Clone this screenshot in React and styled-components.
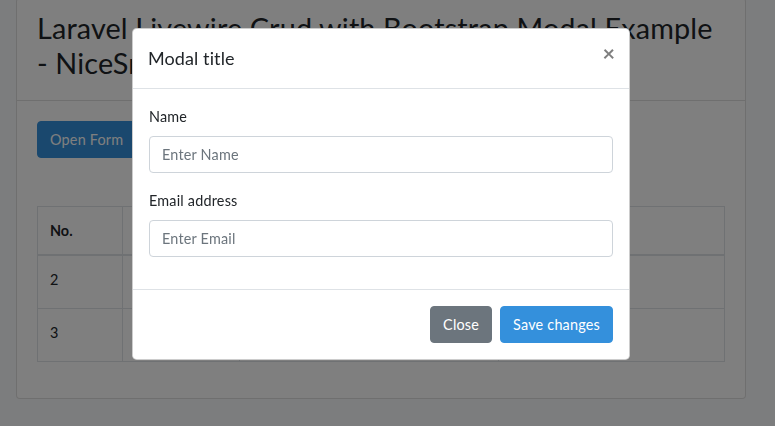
import React from "react";
import styled, { createGlobalStyle } from "styled-components";

const Global = createGlobalStyle`
  html, body { margin: 0; padding: 0; }
  body {
    background: #f8fafc;
    font-family: Lato, "Open Sans", sans-serif;
    font-size: 14.4px;
    line-height: 1.6;
    color: #212529;
    overflow: hidden;
  }
  * { box-sizing: border-box; }
`;

const Page = styled.div`
  padding: 0 29px 0 16px;
  height: 426px;
`;

const Card = styled.div`
  margin-top: -2px;
  background: #fff;
  border: 1px solid rgba(0, 0, 0, 0.125);
  border-radius: 4px;
`;

const CardHeader = styled.div`
  padding: 12px 20px;
  border-bottom: 1px solid rgba(0, 0, 0, 0.125);
`;

const Title = styled.h2`
  margin: 0 0 8px;
  font-size: 28.8px;
  font-weight: 400;
  line-height: 1.2;
  letter-spacing: 0.14px;
`;

const CardBody = styled.div`
  padding: 20px;
`;

const Button = styled.button`
  display: inline-block;
  vertical-align: top;
  font-family: inherit;
  font-size: ${(p) => (p.$sm ? "12.6px" : "14.4px")};
  line-height: ${(p) => (p.$sm ? 1.5 : 1.6)};
  height: ${(p) => (p.$sm ? "28px" : "37px")};
  padding: ${(p) => (p.$sm ? "3px 8px" : "6px 12px")};
  border-radius: ${(p) => (p.$sm ? "3.2px" : "4px")};
  border: 1px solid ${(p) => p.$bg};
  background: ${(p) => p.$bg};
  color: #fff;
  margin: ${(p) => p.$m || "0"};
  letter-spacing: 0.2px;
  cursor: pointer;
`;

const Table = styled.table`
  width: 100%;
  margin-top: 48px;
  margin-bottom: 16px;
  border-collapse: collapse;
  table-layout: fixed;
`;

const Th = styled.th`
  width: ${(p) => p.$w || "auto"};
  text-align: left;
  padding: 12px;
  border: 1px solid #dee2e6;
  border-bottom: 2px solid #dee2e6;
  font-weight: 700;
`;

const Td = styled.td`
  padding: 12px;
  border: 1px solid #dee2e6;
  vertical-align: top;
  line-height: 23px;
`;

const Backdrop = styled.div`
  position: fixed;
  inset: 0;
  background: rgba(0, 0, 0, 0.5);
`;

const Modal = styled.div`
  position: fixed;
  top: 28px;
  left: 132px;
  width: 498px;
  background: #fff;
  border: 1px solid rgba(0, 0, 0, 0.2);
  border-radius: 4.8px;
  display: flex;
  flex-direction: column;
`;

const ModalHeader = styled.div`
  display: flex;
  align-items: flex-start;
  justify-content: space-between;
  padding: 16px 16px 16px 15px;
  border-bottom: 1px solid #dee2e6;
`;

const ModalTitle = styled.h5`
  margin: 0;
  font-size: 18px;
  font-weight: 400;
  line-height: 1.5;
  letter-spacing: 0.1px;
`;

const CloseX = styled.span`
  font-size: 21.6px;
  font-weight: 700;
  line-height: 1;
  color: #000;
  opacity: 0.5;
  margin-top: -2px;
  margin-right: -2px;
`;

const ModalBody = styled.div`
  padding: 16px;
  letter-spacing: 0.2px;
`;

const FormGroup = styled.div`
  margin-bottom: 16px;
`;

const Label = styled.label`
  display: block;
  margin-bottom: 8px;
`;

const Input = styled.input`
  display: block;
  width: 100%;
  height: 37px;
  padding: 6px 12px;
  font-family: inherit;
  font-size: 14.4px;
  line-height: 1.6;
  letter-spacing: 0.2px;
  color: #495057;
  border: 1px solid #ced4da;
  border-radius: 4px;
  background: #fff;
  &::placeholder { color: #6c757d; }
`;

const ModalFooter = styled.div`
  display: flex;
  justify-content: flex-end;
  align-items: center;
  padding: 12px;
  border-top: 1px solid #dee2e6;
`;

const rows = [
  { id: 2, name: "Hardik", email: "hardik@gmail.com" },
  { id: 3, name: "Vimal", email: "vimal@gmail.com" },
];

export default function App() {
  return (
    <>
      <Global />
      <Page>
        <Card>
          <CardHeader>
            <Title>
              Laravel Livewire Crud with Bootstrap Modal Example
              <br />
              - NiceSnippets.com
            </Title>
          </CardHeader>
          <CardBody>
            <Button $bg="#3490dc">Open Form</Button>
            <Table>
              <thead>
                <tr>
                  <Th $w="85px">No.</Th>
                  <Th $w="117px">Name</Th>
                  <Th $w="259px">Email</Th>
                  <Th>Action</Th>
                </tr>
              </thead>
              <tbody>
                {rows.map((r) => (
                  <tr key={r.id}>
                    <Td>{r.id}</Td>
                    <Td>{r.name}</Td>
                    <Td>{r.email}</Td>
                    <Td>
                      <Button $sm $bg="#3490dc" $m="0 4px 0 0">Edit</Button>
                      <Button $sm $bg="#e3342f">Delete</Button>
                    </Td>
                  </tr>
                ))}
              </tbody>
            </Table>
          </CardBody>
        </Card>
      </Page>
      <Backdrop />
      <Modal>
        <ModalHeader>
          <ModalTitle>Modal title</ModalTitle>
          <CloseX>×</CloseX>
        </ModalHeader>
        <ModalBody>
          <FormGroup>
            <Label>Name</Label>
            <Input placeholder="Enter Name" />
          </FormGroup>
          <FormGroup>
            <Label>Email address</Label>
            <Input placeholder="Enter Email" />
          </FormGroup>
        </ModalBody>
        <ModalFooter>
          <Button $bg="#6c757d" $m="4px">Close</Button>
          <Button $bg="#3490dc" $m="4px">Save changes</Button>
        </ModalFooter>
      </Modal>
    </>
  );
}
